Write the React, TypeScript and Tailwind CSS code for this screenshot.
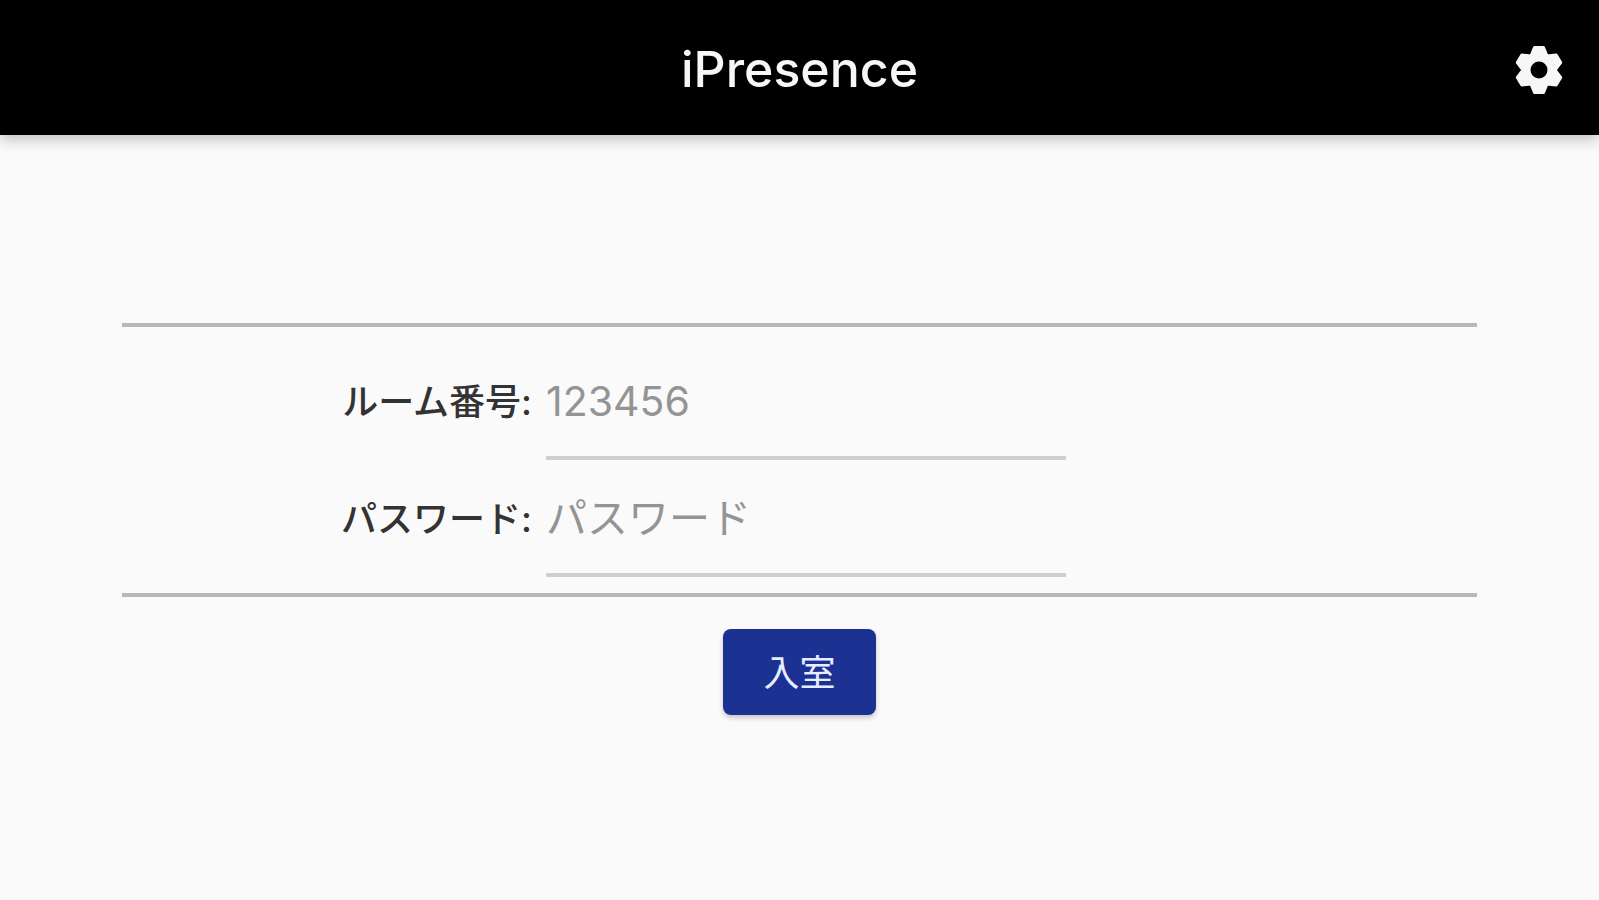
import { useState } from 'react';
import type { FormEvent } from 'react';

interface FieldProps {
  id: string;
  label: string;
  placeholder: string;
  type?: string;
  value: string;
  onChange: (value: string) => void;
}

function GearIcon() {
  return (
    <svg viewBox="-24 -24 48 48" className="size-12" aria-hidden="true">
      <path
        d="M-4.5-22.5H4.5L8-13.9L17.2-15.1L21.7-7.4L16 0L21.7 7.4L17.2 15.1L8 13.9L4.5 22.5H-4.5L-8 13.9L-17.2 15.1L-21.7 7.4L-16 0L-21.7-7.4L-17.2-15.1L-8-13.9Z"
        fill="currentColor"
        stroke="currentColor"
        strokeWidth="3"
        strokeLinejoin="round"
      />
      <circle r="8.5" fill="black" />
    </svg>
  );
}

function Field({ id, label, placeholder, type = 'text', value, onChange }: FieldProps) {
  return (
    <div className="grid grid-cols-[424fr_520fr_411fr] items-stretch h-[117px]">
      <label htmlFor={id} className="flex items-center justify-end pr-3.5 text-[36px] font-medium text-[#333333] whitespace-nowrap">
        {label}:
      </label>
      <input
        id={id}
        type={type}
        value={value}
        placeholder={placeholder}
        onChange={e => onChange(e.target.value)}
        className="w-full min-w-0 pt-1 bg-transparent border-b-4 border-[#cfcfcf] text-[41px] text-[#333333] placeholder:text-[#949494] outline-none focus:border-[#1c3293]"
      />
    </div>
  );
}

export default function App() {
  const [room, setRoom] = useState('');
  const [password, setPassword] = useState('');

  const handleSubmit = (e: FormEvent) => {
    e.preventDefault();
  };

  return (
    <div className="min-h-screen bg-[#fafafa] font-[Inter,'Noto_Sans_CJK_JP',sans-serif]">
      <header className="grid grid-cols-[1fr_auto_1fr] items-center h-[135px] pt-1 px-9 bg-black text-[#f7f7f7] shadow-[0_4px_14px_rgba(0,0,0,0.25)]">
        <h1 className="col-start-2 text-[50px] font-medium">iPresence</h1>
        <button type="button" aria-label="設定" className="justify-self-end cursor-pointer">
          <GearIcon />
        </button>
      </header>

      <form onSubmit={handleSubmit} className="flex flex-col items-center px-[122px] pt-[188px]">
        <div className="w-full border-y-4 border-[#b8b8b8] pt-4 pb-4">
          <Field id="room" label="ルーム番号" placeholder="123456" value={room} onChange={setRoom} />
          <Field id="password" label="パスワード" placeholder="パスワード" type="password" value={password} onChange={setPassword} />
        </div>
        <button
          type="submit"
          className="mt-8 px-10 pt-0.5 h-[86px] rounded-lg bg-[#1c3293] text-[#e8ecff] text-[36px] cursor-pointer shadow-[0_3px_5px_rgba(0,0,0,0.2)]"
        >
          入室
        </button>
      </form>
    </div>
  );
}
